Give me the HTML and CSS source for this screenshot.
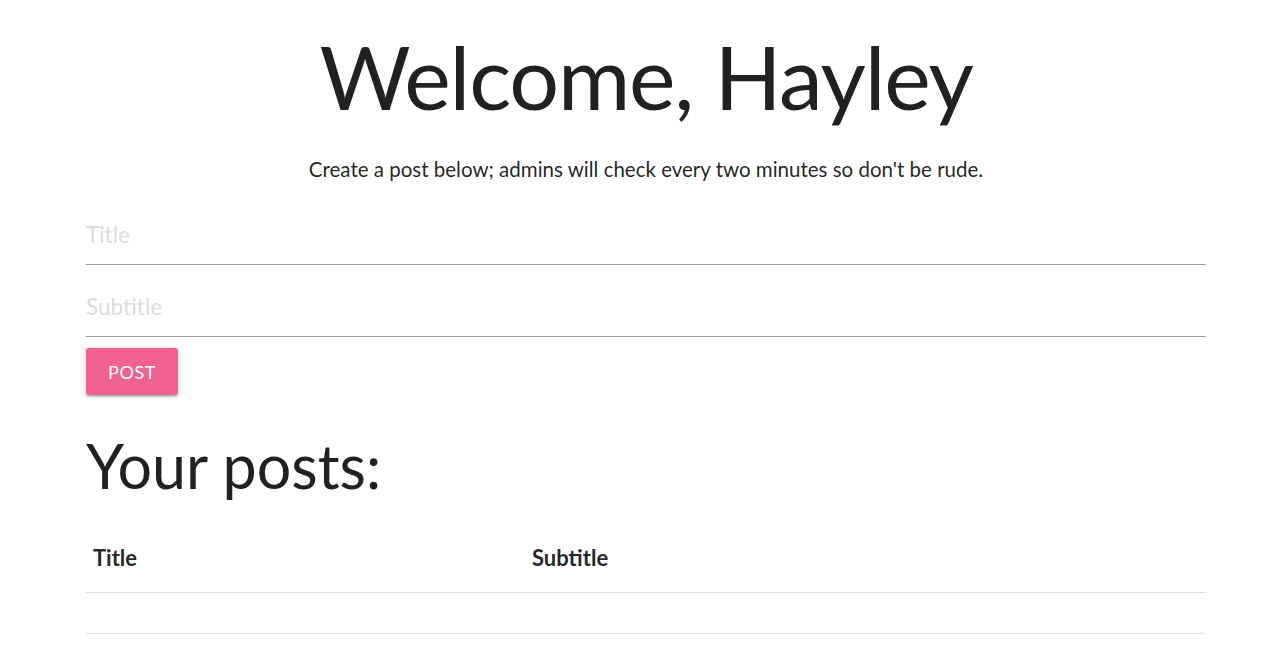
FILE: index.html
```html
<!DOCTYPE html>
<html>
<head>
<meta charset="utf-8">
<link rel="stylesheet" href="styles.css">
</head>
<body>
<main class="container">
  <h1 class="welcome">Welcome, Hayley</h1>
  <p class="intro">Create a post below; admins will check every two minutes so don't be rude.</p>
  <form class="post-form">
    <div class="field"><input type="text" placeholder="Title"></div>
    <div class="field"><input type="text" placeholder="Subtitle"></div>
    <button type="button" class="btn">POST</button>
  </form>
  <h2 class="posts-title">Your posts:</h2>
  <table class="posts">
    <thead>
      <tr><th class="col-title">Title</th><th>Subtitle</th></tr>
    </thead>
    <tbody>
      <tr><td></td><td></td></tr>
    </tbody>
  </table>
</main>
</body>
</html>
```

FILE: styles.css
```css
html, body {
  margin: 0;
  padding: 0;
  background: #fff;
}
body {
  font-family: Lato, "Noto Sans", sans-serif;
  color: rgba(0, 0, 0, 0.87);
}
.container {
  width: 1120px;
  margin-left: 86px;
}
.welcome {
  margin: 0;
  padding-top: 21px;
  text-align: center;
  font-weight: 400;
  font-size: 88px;
  line-height: 110px;
  letter-spacing: -1.2px;
}
.intro {
  margin: 24px 0 0;
  text-align: center;
  font-size: 20.5px;
  line-height: 28px;
}
.post-form {
  margin-top: 22px;
}
.field input {
  display: block;
  box-sizing: border-box;
  width: 100%;
  height: 60px;
  margin: 0;
  padding: 0;
  border: none;
  border-bottom: 1px solid #9e9e9e;
  font-family: inherit;
  font-size: 22.5px;
  color: #333;
  outline: none;
  background: transparent;
}
.field + .field {
  margin-top: 12px;
}
.field input::placeholder {
  color: #dcdcdc;
}
.btn {
  display: block;
  margin-top: 11px;
  width: 92px;
  height: 47px;
  border: none;
  border-radius: 3px;
  background: #f06292;
  color: #fff;
  font-family: inherit;
  font-size: 18px;
  letter-spacing: 0.6px;
  box-shadow: 0 2px 2px 0 rgba(0,0,0,0.14), 0 3px 1px -2px rgba(0,0,0,0.12), 0 1px 5px 0 rgba(0,0,0,0.2);
}
.posts-title {
  margin: 31px 0 0;
  font-weight: 400;
  font-size: 61px;
  line-height: 80px;
}
.posts {
  width: 100%;
  margin-top: 16px;
  border-collapse: collapse;
}
.posts th {
  text-align: left;
  font-size: 22px;
  font-weight: 700;
  padding: 0 7px;
  height: 70px;
  vertical-align: middle;
}
.posts .col-title {
  width: 425px;
}
.posts tr {
  border-bottom: 1px solid #e0e0e0;
}
.posts td {
  height: 40px;
  padding: 0;
}
```
